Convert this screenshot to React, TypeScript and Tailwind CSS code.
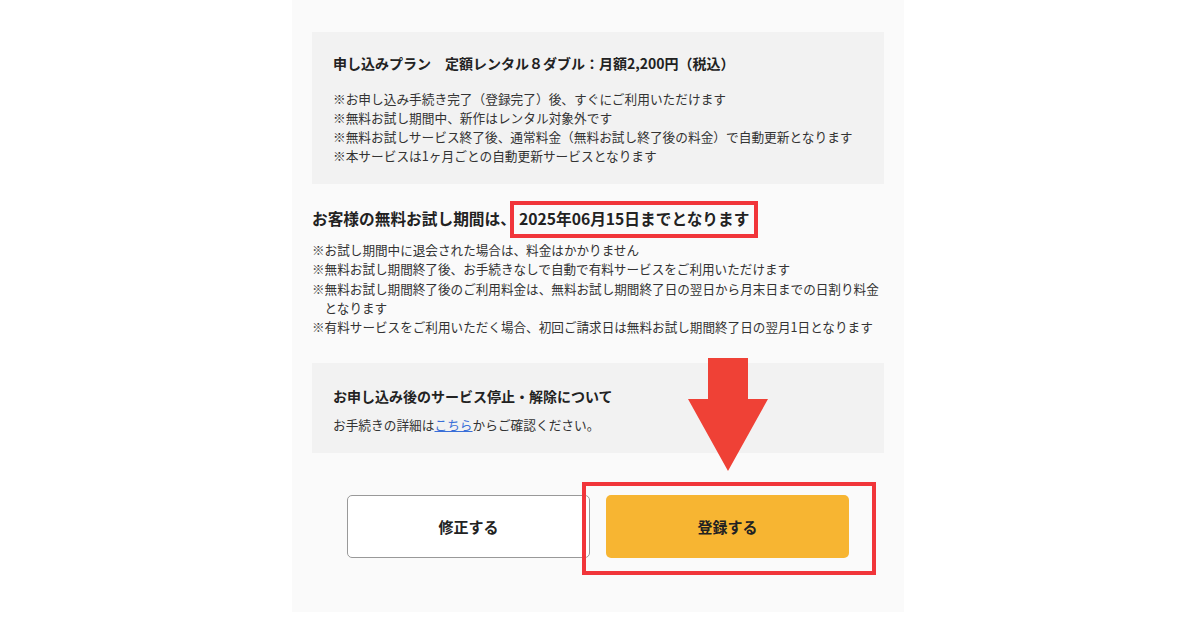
export default function App() {
  const planNotes = [
    '※お申し込み手続き完了（登録完了）後、すぐにご利用いただけます',
    '※無料お試し期間中、新作はレンタル対象外です',
    '※無料お試しサービス終了後、通常料金（無料お試し終了後の料金）で自動更新となります',
    '※本サービスは1ヶ月ごとの自動更新サービスとなります',
  ];
  const trialNotes = [
    '※お試し期間中に退会された場合は、料金はかかりません',
    '※無料お試し期間終了後、お手続きなしで自動で有料サービスをご利用いただけます',
    '※無料お試し期間終了後のご利用料金は、無料お試し期間終了日の翌日から月末日までの日割り料金となります',
    '※有料サービスをご利用いただく場合、初回ご請求日は無料お試し期間終了日の翌月1日となります',
  ];

  return (
    <div
      className="w-[1200px] h-[630px] bg-white overflow-hidden"
      style={{ fontFamily: '"Noto Sans CJK JP", "Noto Sans", sans-serif' }}
    >
      <div className="relative ml-[292px] w-[612px] h-[612px] bg-[#fafafa] px-5 pt-8 text-[#333]">
        <div className="bg-[#f2f2f2] pl-[21px] pr-4 pt-[21px] pb-[19px]">
          <p className="text-[14px] font-bold leading-5 text-[#222]">
            申し込みプラン　定額レンタル８ダブル：月額2,200円（税込）
          </p>
          <ul className="mt-4 text-[12.7px] leading-[19px]">
            {planNotes.map((n) => (
              <li key={n}>{n}</li>
            ))}
          </ul>
        </div>

        <h2 className="mt-[17px] text-[15.7px] font-bold leading-6 text-[#222]">
          お客様の無料お試し期間は、
          <span className="-ml-[6px] inline-block border-4 border-[#f1353a] px-[5px] pt-[2px] pb-[3px] leading-6">
            2025年06月15日までとなります
          </span>
        </h2>
        <ul className="mt-[2px] pr-1 text-[12.6px] leading-[19.3px]">
          {trialNotes.map((n) => (
            <li key={n} className="pl-[1em] -indent-[1em]">
              {n}
            </li>
          ))}
        </ul>

        <div className="mt-[27px] h-[90px] bg-[#f2f2f2] pl-[21px] pt-[23px]">
          <p className="text-[14px] font-bold leading-5 text-[#222]">
            お申し込み後のサービス停止・解除について
          </p>
          <p className="mt-[9px] text-[12.7px] leading-5">
            お手続きの詳細は
            <span className="text-[#3a6fd8] underline">こちら</span>
            からご確認ください。
          </p>
        </div>

        <div className="mt-[42px] flex justify-center gap-4">
          <button className="flex h-[63px] w-[243px] items-center justify-center rounded-[5px] border border-[#999] bg-white text-[15px] font-bold text-[#222]">
            修正する
          </button>
          <button className="flex h-[63px] w-[243px] items-center justify-center rounded-[5px] bg-[#f7b532] text-[15px] font-bold text-[#222]">
            登録する
          </button>
        </div>

        {/* annotations */}
        <div className="pointer-events-none absolute left-[290px] top-[482px] h-[93px] w-[294px] border-4 border-[#f1353a]" />
        <svg
          className="pointer-events-none absolute left-[396px] top-[358px]"
          width="80"
          height="114"
          viewBox="0 0 80 114"
        >
          <polygon points="20,0 60,0 60,41 80,41 40,113 0,41 20,41" fill="#ef4136" />
        </svg>
      </div>
    </div>
  );
}
